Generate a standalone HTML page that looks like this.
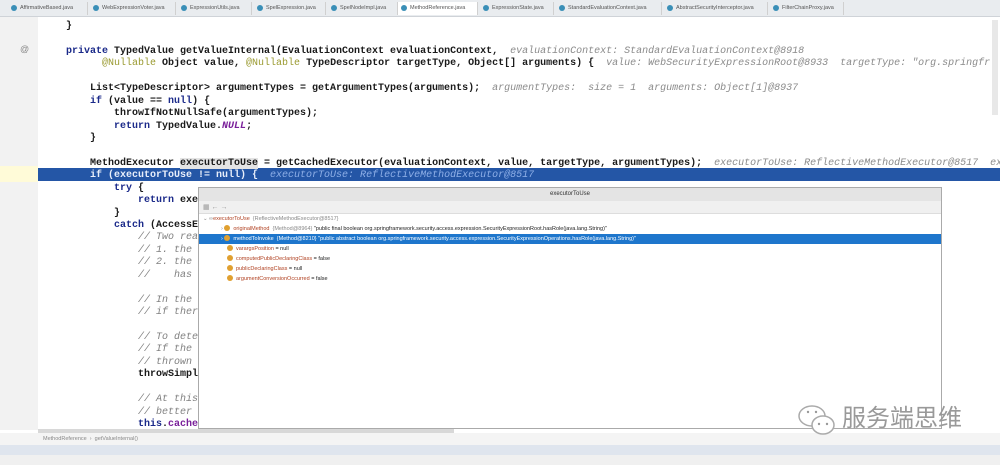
<!DOCTYPE html>
<html><head><meta charset="utf-8"><style>
*{margin:0;padding:0;box-sizing:border-box}
body{width:1000px;height:465px;overflow:hidden;background:#fff;position:relative;font-family:"Liberation Sans",sans-serif}
.abs{position:absolute}
.tabs{left:0;top:0;width:1000px;height:17px;background:#e9ecef;border-bottom:1px solid #cfd3d8}
.tab{position:absolute;top:2px;height:13px;font-size:5.5px;color:#555;line-height:13px;padding-left:12px;border-right:1px solid #d0d0d0}
.tab:before{content:"";position:absolute;left:3px;top:3px;width:6px;height:6px;border-radius:50%;background:#3a8fb7}
.gut{left:0;top:17px;width:38px;height:413px;background:#f2f2f2}
.code{font-family:"Liberation Mono",monospace;font-size:10px;white-space:pre;position:absolute;color:#1a1a1a;font-weight:bold;line-height:12.44px}
.kw{color:#1b2a8a}
.an{color:#9a9a30;font-weight:normal}
.hint{color:#8a8a8a;font-style:italic;font-weight:normal}
.cm{color:#808080;font-style:italic;font-weight:normal}
.pu{color:#7a1f9a;font-style:italic}
.hl{left:38px;top:168px;width:962px;height:13px;background:#2456a6}
.pop{left:198px;top:187px;width:744px;height:242px;background:#fff;border:1px solid #aaa}
.row{position:absolute;left:22px;height:10px;font-size:5.5px;line-height:10px;color:#b04020;white-space:nowrap}
.row i{display:inline-block;width:6px;height:6px;border-radius:50%;background:#e0a030;margin-right:3px;vertical-align:-1px}
.row .g{color:#888}.row .b{color:#222}
</style></head><body>
<div class="abs tabs">
<div class="tab" style="left:8px;width:80px">AffirmativeBased.java</div>
<div class="tab" style="left:90px;width:86px">WebExpressionVoter.java</div>
<div class="tab" style="left:178px;width:74px">ExpressionUtils.java</div>
<div class="tab" style="left:254px;width:72px">SpelExpression.java</div>
<div class="tab" style="left:328px;width:70px">SpelNodeImpl.java</div>
<div class="tab" style="left:398px;width:80px;background:#fff">MethodReference.java</div>
<div class="tab" style="left:480px;width:74px">ExpressionState.java</div>
<div class="tab" style="left:556px;width:106px">StandardEvaluationContext.java</div>
<div class="tab" style="left:664px;width:104px">AbstractSecurityInterceptor.java</div>
<div class="tab" style="left:770px;width:74px">FilterChainProxy.java</div>
</div>
<div class="abs gut"></div>
<div class="abs" style="left:20px;top:44px;font-size:9px;color:#888">@</div>
<div class="abs" style="left:0;top:166px;width:38px;height:16px;background:#fffbd8"></div>
<div class="abs hl"></div>
<div class="code" style="left:66px;top:21px">}

<span class="kw">private</span> TypedValue getValueInternal(EvaluationContext evaluationContext,  <span class="hint">evaluationContext: StandardEvaluationContext@8918</span>
      <span class="an">@Nullable</span> Object value, <span class="an">@Nullable</span> TypeDescriptor targetType, Object[] arguments) {  <span class="hint">value: WebSecurityExpressionRoot@8933  targetType: "org.springfr</span>

    List&lt;TypeDescriptor&gt; argumentTypes = getArgumentTypes(arguments);  <span class="hint">argumentTypes:  size = 1  arguments: Object[1]@8937</span>
    <span class="kw">if</span> (value == <span class="kw">null</span>) {
        throwIfNotNullSafe(argumentTypes);
        <span class="kw">return</span> TypedValue.<span class="pu">NULL</span>;
    }

    MethodExecutor <span style="background:#e4e4e4">executorToUse</span> = getCachedExecutor(evaluationContext, value, targetType, argumentTypes);  <span class="hint">executorToUse: ReflectiveMethodExecutor@8517  ex</span>
<span style="color:#e8eefa">    if (executorToUse != null) {  </span><span class="hint" style="color:#8fb0e8">executorToUse: ReflectiveMethodExecutor@8517</span>
        <span class="kw">try</span> {
            <span class="kw">return</span> exe
        }
        <span class="kw">catch</span> (AccessE
            <span class="cm">// Two rea</span>
            <span class="cm">// 1. the</span>
            <span class="cm">// 2. the</span>
            <span class="cm">//    has</span>

            <span class="cm">// In the</span>
            <span class="cm">// if ther</span>

            <span class="cm">// To dete</span>
            <span class="cm">// If the</span>
            <span class="cm">// thrown</span>
            throwSimpl

            <span class="cm">// At this</span>
            <span class="cm">// better</span>
            <span class="kw">this</span>.<span class="pu" style="font-style:normal">cache</span></div>
<div class="abs pop">
<div class="abs" style="left:0;top:0;width:742px;height:13px;background:#e4e4e4;font-size:6px;line-height:13px;text-align:center;color:#333">executorToUse</div>
<div class="abs" style="left:0;top:13px;width:742px;height:13px;background:#f0f0f0;border-bottom:1px solid #ddd;font-size:7px;color:#999;line-height:13px;padding-left:4px">▦ ← →</div>
<div class="row" style="left:4px;top:26px;color:#b04020"><span class="g">⌄ ∞</span>executorToUse <span class="g">&nbsp;{ReflectiveMethodExecutor@8517}</span></div>
<div class="row" style="top:36px"><span class="g">›&nbsp;</span><i></i>originalMethod <span class="g">&nbsp;{Method@8964}</span> <span class="b">"public final boolean org.springframework.security.access.expression.SecurityExpressionRoot.hasRole(java.lang.String)"</span></div>
<div class="abs" style="left:0;top:46px;width:742px;height:10px;background:#1e76cc"></div>
<div class="row" style="top:46px;color:#fff"><span>›&nbsp;</span><i></i>methodToInvoke &nbsp;{Method@8210} "public abstract boolean org.springframework.security.access.expression.SecurityExpressionOperations.hasRole(java.lang.String)"</div>
<div class="row" style="left:28px;top:56px"><i></i>varargsPosition <span class="b">= null</span></div>
<div class="row" style="left:28px;top:66px"><i></i>computedPublicDeclaringClass <span class="b">= false</span></div>
<div class="row" style="left:28px;top:76px"><i></i>publicDeclaringClass <span class="b">= null</span></div>
<div class="row" style="left:28px;top:86px"><i></i>argumentConversionOccurred <span class="b">= false</span></div>
</div>
<div class="abs" style="left:992px;top:20px;width:6px;height:95px;background:#e8e8e8"></div>
<div class="abs" style="left:38px;top:429px;width:416px;height:4px;background:#d8d8d8"></div>
<div class="abs" style="left:0;top:433px;width:1000px;height:12px;background:#f4f4f4;font-size:5.5px;color:#888;line-height:12px;padding-left:43px">MethodReference &nbsp;›&nbsp; getValueInternal()</div>
<div class="abs" style="left:0;top:445px;width:1000px;height:10px;background:#dfe5ee"></div>
<div class="abs" style="left:0;top:455px;width:1000px;height:10px;background:#f0f0f0"></div>
<svg class="abs" style="left:796px;top:404px" width="44" height="34" viewBox="0 0 44 34"><ellipse cx="16" cy="12" rx="13" ry="10" fill="#fff" stroke="#aaa" stroke-width="1.5"/><ellipse cx="27" cy="21" rx="11" ry="9" fill="#fff" stroke="#aaa" stroke-width="1.5"/><circle cx="23" cy="20" r="1.2" fill="#999"/><circle cx="31" cy="20" r="1.2" fill="#999"/><circle cx="12" cy="8" r="1.2" fill="#999"/><circle cx="20" cy="8" r="1.2" fill="#999"/></svg>
<div class="abs" style="left:842px;top:404px;font-size:24px;color:#999;font-family:'Liberation Sans','Noto Sans CJK SC',sans-serif;line-height:30px">服务端思维</div>
</body></html>
